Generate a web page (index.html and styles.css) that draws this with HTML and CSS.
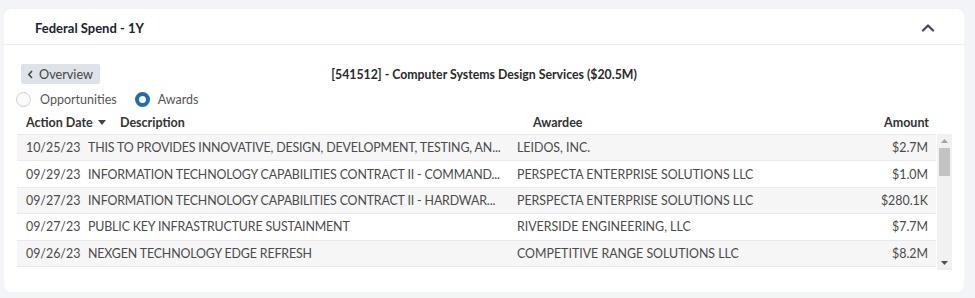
FILE: index.html
```html
<!DOCTYPE html>
<html>
<head>
<meta charset="utf-8">
<link rel="stylesheet" href="styles.css">
</head>
<body>
<div class="card">
  <div class="card-head">
    <span class="card-title">Federal Spend - 1Y</span>
    <svg class="chev" width="14" height="9" viewBox="0 0 14 9"><path d="M2 7.5 L7 2.5 L12 7.5" fill="none" stroke="#3c4a5c" stroke-width="2.2" stroke-linecap="round" stroke-linejoin="round"/></svg>
  </div>
  <div class="card-body">
    <div class="toolbar">
      <button class="back"><svg width="7" height="9" viewBox="0 0 7 9"><path d="M5 1 L1.8 4.5 L5 8" fill="none" stroke="#444" stroke-width="1.6"/></svg>Overview</button>
      <div class="naics">[541512] - Computer Systems Design Services ($20.5M)</div>
    </div>
    <div class="radios">
      <label class="radio"><span class="dot"></span>Opportunities</label>
      <label class="radio"><span class="dot on"></span>Awards</label>
    </div>
    <div class="thead">
      <span class="h-date">Action Date <svg width="8" height="5" viewBox="0 0 8 5"><path d="M0 0 H8 L4 5 Z" fill="#444"/></svg></span>
      <span class="h-desc">Description</span>
      <span class="h-awd">Awardee</span>
      <span class="h-amt">Amount</span>
    </div>
    <div class="scroller">
      <div class="rows">
        <div class="row"><span>10/25/23</span><span class="desc">THIS TO PROVIDES INNOVATIVE, DESIGN, DEVELOPMENT, TESTING, AN...</span><span>LEIDOS, INC.</span><span class="amt">$2.7M</span></div>
        <div class="row"><span>09/29/23</span><span class="desc">INFORMATION TECHNOLOGY CAPABILITIES CONTRACT II - COMMAND...</span><span>PERSPECTA ENTERPRISE SOLUTIONS LLC</span><span class="amt">$1.0M</span></div>
        <div class="row"><span>09/27/23</span><span class="desc">INFORMATION TECHNOLOGY CAPABILITIES CONTRACT II - HARDWAR...</span><span>PERSPECTA ENTERPRISE SOLUTIONS LLC</span><span class="amt">$280.1K</span></div>
        <div class="row"><span>09/27/23</span><span class="desc">PUBLIC KEY INFRASTRUCTURE SUSTAINMENT</span><span>RIVERSIDE ENGINEERING, LLC</span><span class="amt">$7.7M</span></div>
        <div class="row"><span>09/26/23</span><span class="desc">NEXGEN TECHNOLOGY EDGE REFRESH</span><span>COMPETITIVE RANGE SOLUTIONS LLC</span><span class="amt">$8.2M</span></div>
      </div>
      <div class="sbar">
        <svg class="arr" width="7" height="4" viewBox="0 0 7 4"><path d="M0 4 H7 L3.5 0 Z" fill="#a3a3a3"/></svg>
        <div class="thumb"></div>
        <div class="gap"></div>
        <svg class="arr" width="7" height="4" viewBox="0 0 7 4"><path d="M0 0 H7 L3.5 4 Z" fill="#505050"/></svg>
      </div>
    </div>
  </div>
</div>
</body>
</html>
```
FILE: styles.css
```css
html, body { margin: 0; padding: 0; }
body {
  background: #f3f4f8;
  font-family: Lato, "Open Sans", sans-serif;
  color: #444;
  width: 975px;
  height: 298px;
  overflow: hidden;
}
.card {
  margin: 9px 0 0 4px;
  width: 960px;
  height: 283px;
  background: #fff;
  border-radius: 8px;
  box-sizing: border-box;
}
.card-head {
  height: 36px;
  box-sizing: border-box;
  border-bottom: 1px solid #eceef2;
  display: flex;
  align-items: center;
  justify-content: space-between;
  padding: 0 29px 0 31px;
}
.card-title {
  font-weight: 700;
  font-size: 13px;
  color: #1c2230;
  margin-top: 2px;
}
.chev { margin-top: 1px; }
.card-body {
  padding: 19px 0 0 13px;
}
.toolbar {
  display: flex;
  align-items: center;
  position: relative;
  height: 20px;
}
.back {
  margin-left: 4px;
  height: 20px;
  width: 79px;
  border: none;
  border-radius: 2px;
  background: #dde3e8;
  font-family: inherit;
  font-size: 12.7px;
  color: #444;
  display: flex;
  align-items: center;
  gap: 5px;
  padding: 0 0 0 6px;
}
.naics {
  position: absolute;
  left: 0;
  right: 13px;
  text-align: center;
  font-weight: 700;
  font-size: 12.3px;
  color: #2a2a2a;
  pointer-events: none;
}
.radios {
  display: flex;
  align-items: center;
  margin: 7px 0 0 -1px;
  height: 16px;
  font-size: 12.5px;
  color: #555;
}
.radio {
  display: flex;
  align-items: center;
  gap: 9px;
  margin-right: 18px;
}
.radio:last-child { margin-right: 0; gap: 8px; }
.dot {
  width: 15px;
  height: 15px;
  box-sizing: border-box;
  border-radius: 50%;
  border: 1px solid #cfcfcf;
  background: #fafafa;
}
.dot.on {
  border: 4.5px solid #1f6db3;
  background: #fff;
}
.thead {
  display: grid;
  grid-template-columns: 94px 413px 1fr auto;
  margin-top: 6px;
  height: 19px;
  align-items: center;
  font-weight: 700;
  font-size: 12.5px;
  color: #333;
  width: 920px;
  padding: 0 8px 0 9px;
  box-sizing: border-box;
}
.thead span { white-space: nowrap; }
.h-date svg { margin-left: 2px; vertical-align: middle; position: relative; top: -1px; }
.h-amt { text-align: right; }
.scroller {
  margin-top: 2px;
  display: flex;
  width: 935px;
  height: 136px;
}
.rows {
  width: 920px;
  border-top: 1px solid #e9e9e9;
}
.row {
  display: grid;
  grid-template-columns: 50px 417px 1fr auto;
  column-gap: 12px;
  height: 26.4px;
  box-sizing: border-box;
  border-bottom: 1px solid #e9e9e9;
  align-items: center;
  padding: 0 8px 0 9px;
  font-size: 12.4px;
  color: #4a4a4a;
  white-space: nowrap;
}
.row:nth-child(odd) { background: #f6f6f6; }
.row span { overflow: hidden; text-overflow: ellipsis; }
.row span:first-child { overflow: visible; }
.row .desc { letter-spacing: -0.15px; }
.amt { text-align: right; }
.sbar {
  width: 15px;
  margin-left: 1px;
  background: #f1f1f1;
  display: flex;
  flex-direction: column;
  align-items: center;
}
.arr { margin: 5px 0; flex: none; }
.thumb {
  width: 11px;
  height: 28px;
  background: #c3c3c3;
}
.gap { flex: 1; }
```
